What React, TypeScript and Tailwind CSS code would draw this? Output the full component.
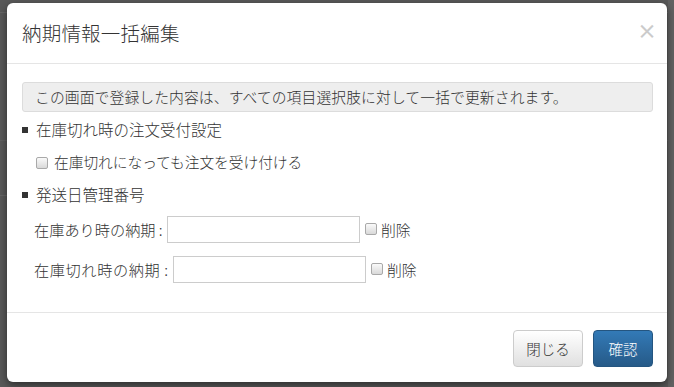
import React from "react";

const font = { fontFamily: '"Noto Sans CJK JP", "Noto Sans", sans-serif' };

function Check() {
  return (
    <span className="inline-block w-[12px] h-[12px] rounded-[2px] border border-[#a9a9a9] bg-gradient-to-b from-[#fafafa] to-[#d9d9d9] shrink-0" />
  );
}

export default function App() {
  return (
    <div
      className="relative w-[674px] h-[387px] bg-[#595959] overflow-hidden text-[#333] font-light"
      style={font}
    >
      {/* faint page behind */}
      <div className="absolute left-0 top-[12px] w-full h-px bg-[#666]" />
      <div className="absolute left-0 top-[140px] w-full h-px bg-[#616161]" />
      <div className="absolute left-0 top-[195px] w-[10px] h-px bg-[#666]" />
      <div className="absolute left-[668px] top-0 w-[6px] h-full bg-[#626262]" />

      <div className="absolute left-[7px] top-[3px] w-[660px] h-[379px] bg-white rounded-[6px] shadow-[0_3px_9px_rgba(0,0,0,0.5)] flex flex-col">
        {/* header */}
        <div className="h-[61px] border-b border-[#e5e5e5] flex items-center justify-between pl-[15px] pr-[15px]">
          <div className="text-[19.5px] leading-none text-[#333] tracking-[0.2px]">納期情報一括編集</div>
          <div className="text-[20px] font-bold leading-none text-black opacity-20 mt-[-4px] mr-[-5px]">×</div>
        </div>
        {/* body */}
        <div className="flex-1 pt-[18px] pl-[15px] pr-[14px] flex flex-col">
          <div className="h-[30px] bg-[#eeeeee] border border-[#dcdcdc] rounded-[3px] flex items-center pl-[12px] text-[14.8px] tracking-[0.1px] text-[#333]">
            この画面で登録した内容は、すべての項目選択肢に対して一括で更新されます。
          </div>
          <div className="h-[36px] flex items-center text-[15.5px] mt-[0px]">
            <span className="inline-block w-[6px] h-[6px] bg-[#333] mr-[8px]" />
            在庫切れ時の注文受付設定
          </div>
          <div className="h-[29px] flex items-center pl-[14px] text-[14.7px]">
            <Check />
            <span className="ml-[6px]">在庫切れになっても注文を受け付ける</span>
          </div>
          <div className="h-[36px] flex items-center text-[15.5px]">
            <span className="inline-block w-[6px] h-[6px] bg-[#333] mr-[8px]" />
            発送日管理番号
          </div>
          <div className="h-[27px] mt-[3px] flex items-center pl-[12px] text-[15.2px]">
            <span className="w-[133px] whitespace-nowrap">在庫あり時の納期 :</span>
            <span className="w-[193px] h-[27px] border border-[#ccc] bg-white" />
            <span className="ml-[5px] mt-[-3px]"><Check /></span>
            <span className="ml-[4px] mt-[2px] text-[14.8px]">削除</span>
          </div>
          <div className="h-[27px] mt-[13px] flex items-center pl-[12px] text-[15.2px]">
            <span className="w-[139px] whitespace-nowrap tracking-[0.6px]">在庫切れ時の納期 :</span>
            <span className="w-[193px] h-[27px] border border-[#ccc] bg-white" />
            <span className="ml-[5px] mt-[-3px]"><Check /></span>
            <span className="ml-[4px] mt-[2px] text-[14.8px]">削除</span>
          </div>
        </div>
        {/* footer */}
        <div className="h-[70px] border-t border-[#e5e5e5] flex items-start justify-end pt-[17px] pr-[14px] gap-[10px]">
          <div className="w-[70px] h-[37px] rounded-[4px] border border-[#ccc] bg-gradient-to-b from-white to-[#e0e0e0] flex items-center justify-center text-[14.5px] text-[#333]">
            閉じる
          </div>
          <div className="w-[60px] h-[37px] rounded-[4px] border border-[#245580] bg-gradient-to-b from-[#337ab7] to-[#265a88] flex items-center justify-center text-[14.5px] text-white">
            確認
          </div>
        </div>
      </div>
    </div>
  );
}
